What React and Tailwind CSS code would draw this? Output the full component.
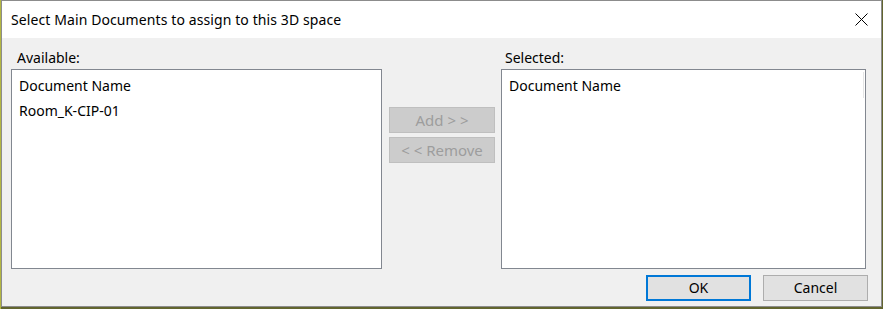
import React from "react";

function ListBox({ rows, divider }) {
  return (
    <div className="relative h-[200px] border border-[#828790] bg-white pt-[3px]">
      {divider && (
        <div className="absolute right-[1px] top-[2px] h-[26px] w-px bg-[#e5e5e5]" />
      )}
      {rows.map((row, i) => (
        <div key={i} className="h-[25px] pl-[7px] leading-[25px]">
          {row}
        </div>
      ))}
    </div>
  );
}

function DisabledButton({ children }) {
  return (
    <button
      disabled
      className="h-[26px] w-[106px] border border-[#bfbfbf] bg-[#cccccc] text-[15px] text-[#9d9d9d] leading-[24px]"
    >
      {children}
    </button>
  );
}

export default function App() {
  return (
    <div className="flex h-[309px] w-[883px] border-l border-[#b3b641] bg-[#62652f] font-['Noto_Sans',sans-serif] text-[14px] text-black">
      <div className="flex h-[307px] w-[881px] flex-col border border-[#8c8c8c] bg-[#f0f0f0]">
        <div className="flex h-[37px] items-center justify-between bg-white pl-[9px] pr-[13px]">
          <span className="text-[14px] tracking-[0.1px]">
            Select Main Documents to assign to this 3D space
          </span>
          <svg width="13" height="13" viewBox="0 0 13 13">
            <path d="M0.5 0.5 L12.5 12.5 M12.5 0.5 L0.5 12.5" stroke="#000" strokeWidth="1" />
          </svg>
        </div>

        <div className="flex flex-1 flex-col pl-[9px]">
          <div className="flex pt-[9px]">
            <div className="w-[371px]">
              <div className="h-[22px] pl-[6px] leading-[22px]">Available:</div>
              <ListBox rows={["Document Name", "Room_K-CIP-01"]} />
            </div>

            <div className="ml-[7px] flex w-[106px] flex-col gap-[4px] pt-[60px]">
              <DisabledButton>Add &gt; &gt;</DisabledButton>
              <DisabledButton>&lt; &lt; Remove</DisabledButton>
            </div>

            <div className="ml-[6px] w-[365px]">
              <div className="h-[22px] pl-[4px] leading-[22px]">Selected:</div>
              <ListBox rows={["Document Name"]} divider />
            </div>
          </div>

          <div className="mt-[6px] flex justify-end gap-[12px] pr-[13px]">
            <button className="h-[26px] w-[105px] border-2 border-[#0078d7] bg-[#e1e1e1] leading-[22px]">
              OK
            </button>
            <button className="h-[26px] w-[105px] border border-[#adadad] bg-[#e1e1e1] leading-[24px]">
              Cancel
            </button>
          </div>
        </div>
      </div>
    </div>
  );
}
